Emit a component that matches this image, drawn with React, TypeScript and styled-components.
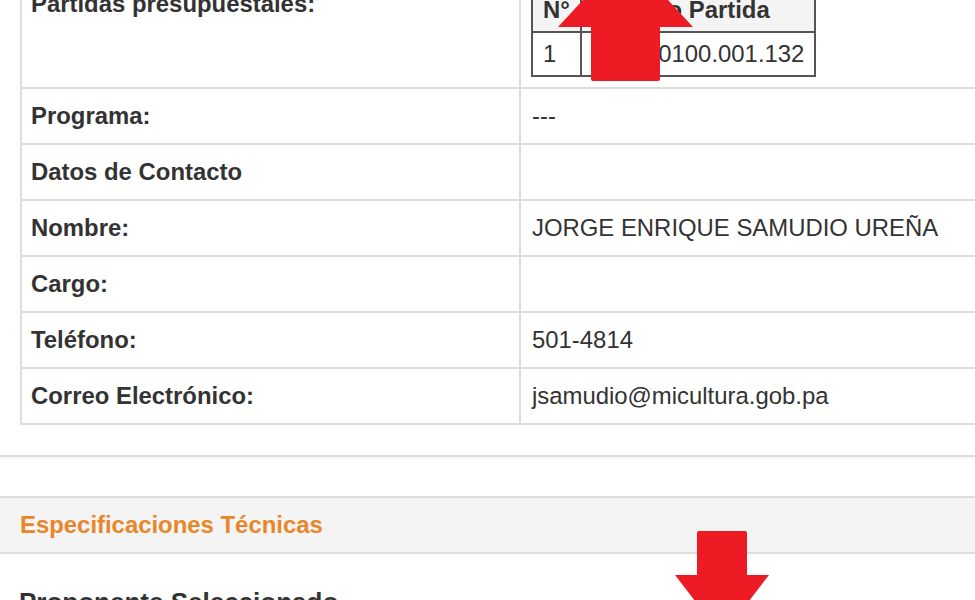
import React from "react";
import styled, { createGlobalStyle } from "styled-components";

const Global = createGlobalStyle`
  html, body { margin: 0; padding: 0; background: #fff; overflow: hidden; }
  body {
    font-family: "Liberation Sans", Arial, Helvetica, sans-serif;
    font-size: 23.9px;
    color: #333;
  }
  * { box-sizing: border-box; }
`;

const Screen = styled.div`
  position: relative;
  width: 975px;
  height: 600px;
  overflow: hidden;
`;

const Page = styled.div`
  margin-top: -25px;
`;

const DetailPanel = styled.section`
  padding: 0 0 30px 20px;
  margin-right: -40px;
  margin-bottom: 39px;
  border-bottom: 2px solid #ddd;
  box-shadow: 0 1px 2px rgba(0, 0, 0, 0.06);
`;

const OuterTable = styled.div`
  border-left: 2px solid #ddd;
  border-bottom: 2px solid #ddd;
`;

const Row = styled.div`
  display: grid;
  grid-template-columns: 499px 1fr;
  border-top: 2px solid #ddd;
`;

const LabelCell = styled.div<{ $top?: boolean }>`
  border-right: 2px solid #ddd;
  padding: 10px 9px;
  line-height: 34px;
  font-weight: bold;
  display: flex;
  align-items: ${(p) => (p.$top ? "flex-start" : "center")};
`;

const ValueCell = styled.div`
  padding: 10px 11px;
  line-height: 34px;
  display: flex;
  align-items: center;
`;

const BudgetCell = styled.div`
  padding: 10px 10px;
  line-height: 34px;
`;

const InnerTable = styled.table`
  border-spacing: 0;
  border-left: 2px solid #555;
  border-top: 2px solid #555;
  font-size: 23.9px;
  color: #333;
`;

const HeadCell = styled.th<{ $w?: number }>`
  background: #f4f4f4;
  font-weight: bold;
  text-align: left;
  padding: 4px 10px;
  line-height: 34px;
  border-right: 2px solid #555;
  border-bottom: 2px solid #555;
  white-space: nowrap;
  ${(p) => (p.$w ? `width: ${p.$w}px;` : "")}
`;

const BodyCell = styled.td`
  padding: 4px 10px;
  line-height: 34px;
  border-right: 2px solid #555;
  border-bottom: 2px solid #555;
  white-space: nowrap;
`;

const SpecPanel = styled.section`
  border-top: 2px solid #ddd;
`;

const SpecHeading = styled.div`
  background: #f4f4f4;
  border-bottom: 2px solid #ddd;
  padding: 10px 20px;
  line-height: 34px;
  font-weight: bold;
  color: #e8872a;
`;

const SpecBody = styled.div`
  padding: 34px 19px;
`;

const SubTitle = styled.h4`
  margin: 0;
  font-size: 26px;
  line-height: 1.1;
  font-weight: bold;
  color: #333;
`;

const ArrowLayer = styled.svg`
  position: absolute;
  left: 0;
  top: 0;
  width: 975px;
  height: 600px;
  pointer-events: none;
  overflow: visible;
`;

const rows: { label: string; value: string }[] = [
  { label: "Programa:", value: "---" },
  { label: "Datos de Contacto", value: "" },
  { label: "Nombre:", value: "JORGE ENRIQUE SAMUDIO UREÑA" },
  { label: "Cargo:", value: "" },
  { label: "Teléfono:", value: "501-4814" },
  { label: "Correo Electrónico:", value: "jsamudio@micultura.gob.pa" },
];

export default function App() {
  return (
    <Screen>
      <Global />
      <Page>
        <DetailPanel>
          <OuterTable>
            <Row>
              <LabelCell $top>Partidas presupuestales:</LabelCell>
              <BudgetCell>
                <InnerTable>
                  <thead>
                    <tr>
                      <HeadCell>N°</HeadCell>
                      <HeadCell $w={217}>Número Partida</HeadCell>
                    </tr>
                  </thead>
                  <tbody>
                    <tr>
                      <BodyCell>1</BodyCell>
                      <BodyCell>1.120.0100.001.132</BodyCell>
                    </tr>
                  </tbody>
                </InnerTable>
              </BudgetCell>
            </Row>
            {rows.map((r) => (
              <Row key={r.label}>
                <LabelCell>{r.label}</LabelCell>
                <ValueCell>{r.value}</ValueCell>
              </Row>
            ))}
          </OuterTable>
        </DetailPanel>
        <SpecPanel>
          <SpecHeading>Especificaciones Técnicas</SpecHeading>
          <SpecBody>
            <SubTitle>Proponente Seleccionado</SubTitle>
          </SpecBody>
        </SpecPanel>
      </Page>
      <ArrowLayer viewBox="0 0 975 600">
        <path
          d="M625.5 -46 L693 27 L660 27 L660 79 Q660 81 658 81 L593 81 Q591 81 591 79 L591 27 L558 27 Z"
          fill="#ed1c24"
        />
        <path
          d="M699 531 L745 531 Q747 531 747 533 L747 575 L769 575 L722 636 L675 575 L697 575 L697 533 Q697 531 699 531 Z"
          fill="#ed1c24"
        />
      </ArrowLayer>
    </Screen>
  );
}
